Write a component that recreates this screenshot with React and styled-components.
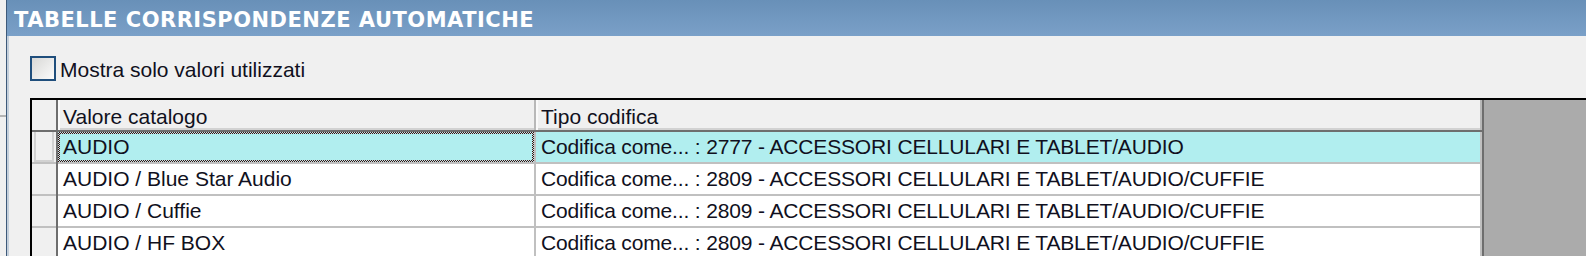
import React from 'react'
import styled, { createGlobalStyle } from 'styled-components'

const rows = [
  { valore: 'AUDIO', tipo: 'Codifica come... : 2777 - ACCESSORI CELLULARI E TABLET/AUDIO', selected: true },
  { valore: 'AUDIO / Blue Star Audio', tipo: 'Codifica come... : 2809 - ACCESSORI CELLULARI E TABLET/AUDIO/CUFFIE' },
  { valore: 'AUDIO / Cuffie', tipo: 'Codifica come... : 2809 - ACCESSORI CELLULARI E TABLET/AUDIO/CUFFIE' },
  { valore: 'AUDIO / HF BOX', tipo: 'Codifica come... : 2809 - ACCESSORI CELLULARI E TABLET/AUDIO/CUFFIE' },
]

function App() {
  return (
    <>
      <GlobalStyle />
      <Screen>
        <SideStrip>
          <SideLine />
        </SideStrip>

        <Window>
          <TitleBar>TABELLE CORRISPONDENZE AUTOMATICHE</TitleBar>

          <Content>
            <CheckRow>
              <CheckBox />
              <CheckLabel>Mostra solo valori utilizzati</CheckLabel>
            </CheckRow>

            <GridBox>
              <Table>
                <HeaderRow>
                  <RowHead $header />
                  <HeadCell>Valore catalogo</HeadCell>
                  <HeadCell>Tipo codifica</HeadCell>
                </HeaderRow>

                {rows.map((row) => (
                  <DataRow key={row.valore} $selected={row.selected}>
                    <RowHead>{row.selected && <RowHeadInner />}</RowHead>
                    <Cell $focus={row.selected}>{row.valore}</Cell>
                    <Cell $wide>{row.tipo}</Cell>
                  </DataRow>
                ))}
              </Table>
            </GridBox>
          </Content>
        </Window>
      </Screen>
    </>
  )
}

export default App

const GlobalStyle = createGlobalStyle`
  html, body {
    margin: 0;
    padding: 0;
    background: #f0f0f0;
    overflow: hidden;
  }
  body {
    font-family: "Liberation Sans", Arial, sans-serif;
    color: #101020;
  }
`

const Screen = styled.div`
  display: flex;
  width: 1586px;
  height: 256px;
  overflow: hidden;
  background: #f0f0f0;
`

const SideStrip = styled.div`
  width: 6px;
  flex-shrink: 0;
  padding-top: 115px;
  border-right: 1px solid #3e5a7a;
`

const SideLine = styled.div`
  height: 2px;
  background: #b4b4b4;
`

const Window = styled.div`
  flex: 1;
  min-width: 0;
  display: flex;
  flex-direction: column;
`

const TitleBar = styled.div`
  flex-shrink: 0;
  height: 36px;
  box-sizing: border-box;
  padding: 4px 0 0 7px;
  line-height: 32px;
  background: linear-gradient(to bottom, #6890b8, #7aa0c8);
  color: #fff;
  font-family: "DejaVu Sans", Verdana, sans-serif;
  font-weight: bold;
  font-size: 21px;
  letter-spacing: 0.5px;
  white-space: nowrap;
  overflow: hidden;
`

const Content = styled.div`
  flex: 1;
  min-height: 0;
  display: flex;
  flex-direction: column;
  border-left: 2px solid #c4cfdb;
  padding: 20px 0 0 21px;
`

const CheckRow = styled.div`
  flex-shrink: 0;
  display: flex;
  align-items: flex-start;
  gap: 4px;
  height: 25px;
  margin-bottom: 17px;
`

const CheckBox = styled.div`
  width: 26px;
  height: 25px;
  box-sizing: border-box;
  border: 2px solid #1f4e7c;
  background: linear-gradient(135deg, #d8d8d6, #fbfbfb);
`

const CheckLabel = styled.div`
  font-size: 21px;
  line-height: 25px;
  padding-top: 1px;
  white-space: nowrap;
`

const GridBox = styled.div`
  flex: 1;
  min-height: 0;
  overflow: hidden;
  border-top: 2px solid #000;
  border-left: 2px solid #000;
  background: #ababab;
`

const Table = styled.div`
  width: 1452px;
  border-right: 2px solid #6e6e6e;
  box-sizing: border-box;
  font-size: 21px;
  background: #fff;
`

const HeaderRow = styled.div`
  display: grid;
  grid-template-columns: 26px 478px 946px;
  height: 32px;
  box-sizing: border-box;
  border-bottom: 2px solid #6e6e6e;
  background: #f0f0f0;
`

const DataRow = styled.div`
  display: grid;
  grid-template-columns: 26px 478px 946px;
  height: 32px;
  box-sizing: border-box;
  border-bottom: 2px solid #c0c0c0;
  background: ${(p) => (p.$selected ? '#b1eeef' : '#fff')};
`

const RowHead = styled.div`
  background: #f0f0f0;
  border-right: 2px solid #6e6e6e;
  box-shadow: ${(p) => (p.$header ? 'none' : 'inset 0 -2px 0 #c0c0c0')};
  margin-bottom: ${(p) => (p.$header ? '0' : '-2px')};
  display: flex;
  padding: 0 2px 2px 2px;
`

const RowHeadInner = styled.div`
  flex: 1;
  border: 2px solid #d2d2d2;
  border-top: none;
`

const HeadCell = styled.div`
  padding: 3px 0 0 5px;
  line-height: 27px;
  border-right: 2px solid #b8b8b8;
  box-shadow: inset 2px 0 0 #fafafa, inset 0 -2px 0 #d2d2d2;
  white-space: nowrap;
  overflow: hidden;
`

const Cell = styled.div`
  padding-left: ${(p) => (p.$focus ? '3px' : '5px')};
  line-height: ${(p) => (p.$focus ? '26px' : '30px')};
  letter-spacing: ${(p) => (p.$wide ? '-0.15px' : '0')};
  border-right: 2px solid #c0c0c0;
  white-space: nowrap;
  overflow: hidden;
  ${(p) =>
    p.$focus &&
    `
    border: 2px solid transparent;
    background:
      linear-gradient(#b1eeef, #b1eeef) padding-box,
      repeating-conic-gradient(#4a0808 0 25%, #b1eeef 0 50%) border-box 0 0 / 2px 2px;
    box-shadow: 2px 0 0 #c0c0c0;
    margin-right: 2px;
  `}
`
